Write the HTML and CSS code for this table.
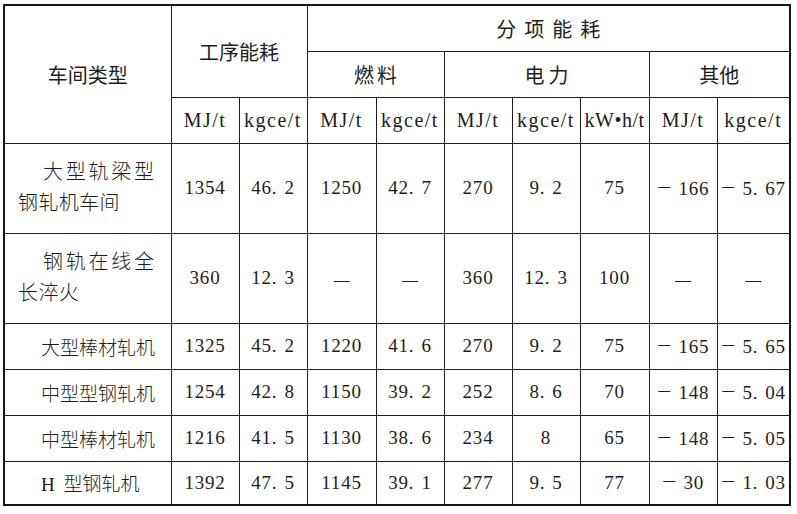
FILE: index.html
```html
<!DOCTYPE html>
<html lang="zh-CN">
<head>
<meta charset="utf-8">
<title>车间能耗</title>
<link rel="stylesheet" href="styles.css">
</head>
<body>
<table class="energy">
  <colgroup>
    <col class="c-name"><col class="c68"><col class="c68"><col class="c69"><col class="c68"><col class="c68"><col class="c68"><col class="c69"><col class="c68"><col class="c73">
  </colgroup>
  <thead>
    <tr class="r46">
      <th rowspan="3" class="cj">车间类型</th>
      <th rowspan="2" colspan="2" class="cj">工序能耗</th>
      <th colspan="7" class="cj wide">分项能耗</th>
    </tr>
    <tr class="r46">
      <th colspan="2" class="cj sp3">燃料</th>
      <th colspan="3" class="cj sp4">电力</th>
      <th colspan="2" class="cj sp2">其他</th>
    </tr>
    <tr class="r45 unit">
      <th>MJ/t</th><th>kgce/t</th><th>MJ/t</th><th>kgce/t</th><th>MJ/t</th><th>kgce/t</th><th class="kwh">kW•h/t</th><th>MJ/t</th><th>kgce/t</th>
    </tr>
  </thead>
  <tbody>
    <tr class="r90">
      <td class="name two">大型轨梁型钢轧机车间</td>
      <td>1354</td><td>46<span class="dp">.</span>2</td><td>1250</td><td>42<span class="dp">.</span>7</td><td>270</td><td>9<span class="dp">.</span>2</td><td>75</td><td><span class="m">−</span>166</td><td><span class="m">−</span>5<span class="dp">.</span>67</td>
    </tr>
    <tr class="r90">
      <td class="name two">钢轨在线全长淬火</td>
      <td>360</td><td>12<span class="dp">.</span>3</td><td class="dash">—</td><td class="dash">—</td><td>360</td><td>12<span class="dp">.</span>3</td><td>100</td><td class="dash">—</td><td class="dash">—</td>
    </tr>
    <tr class="r46">
      <td class="name">大型棒材轧机</td>
      <td>1325</td><td>45<span class="dp">.</span>2</td><td>1220</td><td>41<span class="dp">.</span>6</td><td>270</td><td>9<span class="dp">.</span>2</td><td>75</td><td><span class="m">−</span>165</td><td><span class="m">−</span>5<span class="dp">.</span>65</td>
    </tr>
    <tr class="r46">
      <td class="name">中型型钢轧机</td>
      <td>1254</td><td>42<span class="dp">.</span>8</td><td>1150</td><td>39<span class="dp">.</span>2</td><td>252</td><td>8<span class="dp">.</span>6</td><td>70</td><td><span class="m">−</span>148</td><td><span class="m">−</span>5<span class="dp">.</span>04</td>
    </tr>
    <tr class="r46">
      <td class="name">中型棒材轧机</td>
      <td>1216</td><td>41<span class="dp">.</span>5</td><td>1130</td><td>38<span class="dp">.</span>6</td><td>234</td><td>8</td><td>65</td><td><span class="m">−</span>148</td><td><span class="m">−</span>5<span class="dp">.</span>05</td>
    </tr>
    <tr class="r44">
      <td class="name">H 型钢轧机</td>
      <td>1392</td><td>47<span class="dp">.</span>5</td><td>1145</td><td>39<span class="dp">.</span>1</td><td>277</td><td>9<span class="dp">.</span>5</td><td>77</td><td><span class="m">−</span>30</td><td><span class="m">−</span>1<span class="dp">.</span>03</td>
    </tr>
  </tbody>
</table>
</body>
</html>
```
FILE: styles.css
```css
html, body {
  margin: 0;
  padding: 0;
  background: #ffffff;
}

body {
  color: #1d1d1d;
  font-family: "Liberation Serif", "Noto Sans CJK SC", serif;
}

.energy {
  margin: 4px 0 0 3px;
  border-collapse: collapse;
  table-layout: fixed;
  width: 788px;
  border: 2px solid #151515;
}

.c-name { width: 167px; }
.c68 { width: 68px; }
.c69 { width: 69px; }
.c73 { width: 73px; }

.energy th,
.energy td {
  border: 1px solid #1e1e1e;
  padding: 0;
  text-align: center;
  vertical-align: middle;
  font-weight: normal;
  white-space: nowrap;
}

.r46 { height: 46px; }
.r45 { height: 46px; }
.r44 { height: 44px; }
.r90 { height: 90px; }

.cj {
  font-family: "Noto Sans CJK SC", sans-serif;
  font-size: 20px;
  font-weight: 300;
}

.wide { letter-spacing: 8px; text-indent: 8px; }
.sp3 { letter-spacing: 3px; text-indent: 3px; }
.sp4 { letter-spacing: 4px; text-indent: 4px; }
.sp2 { letter-spacing: 0; }

.unit th {
  font-family: "Liberation Serif", serif;
  font-size: 20px;
  letter-spacing: 1.5px;
}

.unit .kwh { letter-spacing: 0.5px; }

.energy td {
  font-family: "Liberation Serif", serif;
  font-size: 19px;
  letter-spacing: 0.8px;
}

.dp { margin-right: 7px; }

.m {
  display: inline-block;
  letter-spacing: 0;
  transform: scaleX(1.35);
  vertical-align: 1px;
  margin: 0 9px 0 2px;
}

.energy td.dash {
  font-family: "Noto Sans CJK SC", sans-serif;
  font-size: 20px;
  font-weight: 300;
  letter-spacing: 0;
}

.energy td.name {
  font-family: "Liberation Serif", "Noto Sans CJK SC", sans-serif;
  font-size: 19px;
  font-weight: 300;
  letter-spacing: 0;
  word-spacing: 4px;
  text-align: left;
  padding-left: 36px;
}

.energy td.two {
  white-space: normal;
  font-size: 20px;
  letter-spacing: 0.4px;
  line-height: 31px;
  text-align: justify;
  text-indent: 25px;
  padding: 0 16px 0 13px;
}
```
